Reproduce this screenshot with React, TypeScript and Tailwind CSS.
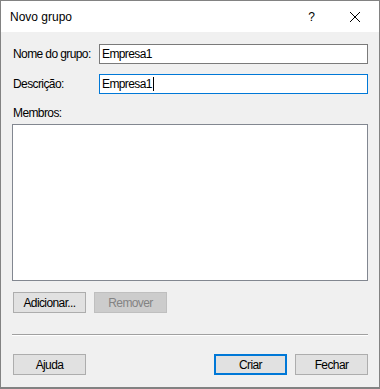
import React from 'react'

const font = { fontFamily: '"Liberation Sans", Arial, sans-serif' }

function WinButton({
  label,
  disabled,
  isDefault,
}: {
  label: string
  disabled?: boolean
  isDefault?: boolean
}) {
  let cls = 'bg-[#e1e1e1] border border-[#adadad] text-black'
  if (disabled) cls = 'bg-[#cccccc] border border-[#bfbfbf] text-[#838383]'
  if (isDefault) cls = 'bg-[#e1e1e1] border-2 border-[#0078d7] text-black'
  return (
    <div
      className={`w-[73px] h-[21px] flex items-center justify-center text-[12px] tracking-[-0.6px] ${cls}`}
    >
      {label}
    </div>
  )
}

export default function App() {
  return (
    <div
      className="w-[380px] h-[389px] flex flex-col border border-b-2 border-[#828282] bg-[#f0f0f0] text-black"
      style={font}
    >
      {/* title bar */}
      <div className="h-[31px] bg-white flex items-center shrink-0">
        <span className="pl-[9px] text-[12px] mt-[1px]">Novo grupo</span>
        <span className="ml-auto text-[12px] mr-[34px] mt-[1px]">?</span>
        <svg width="12" height="12" viewBox="0 0 12 12" className="mr-[18px]">
          <path d="M1 1 L11 11 M11 1 L1 11" stroke="#000" strokeWidth="1" fill="none" />
        </svg>
      </div>

      {/* body */}
      <div className="flex-1 flex flex-col px-[11px] pt-[12px] text-[12px] tracking-[-0.6px]">
        <div className="flex items-center h-[20px]">
          <span className="w-[87px] pl-[1px]">Nome do grupo:</span>
          <div className="flex-1 h-[20px] bg-white border border-[#7a7a7a] flex items-center pl-[2px]">
            Empresa1
          </div>
        </div>
        <div className="flex items-center h-[20px] mt-[10px]">
          <span className="w-[87px] pl-[1px]">Descrição:</span>
          <div className="flex-1 h-[20px] bg-white border border-[#0078d7] flex items-center pl-[2px]">
            Empresa1
            <span className="inline-block w-[1px] h-[14px] bg-black ml-[1px]" />
          </div>
        </div>

        <div className="mt-[12px] h-[15px] leading-[15px] pl-[1px]">Membros:</div>
        <div className="mt-[3px] h-[157px] bg-white border border-[#828790]" />

        <div className="flex gap-[8px] mt-[11px] pl-[1px]">
          <WinButton label="Adicionar..." />
          <WinButton label="Remover" disabled />
        </div>

        <div className="mt-[21px] border-t border-[#a0a0a0] border-b border-b-white" />

        <div className="flex mt-[18px] pl-[1px]">
          <WinButton label="Ajuda" />
          <div className="ml-auto flex gap-[8px]">
            <WinButton label="Criar" isDefault />
            <WinButton label="Fechar" />
          </div>
        </div>
      </div>
    </div>
  )
}
